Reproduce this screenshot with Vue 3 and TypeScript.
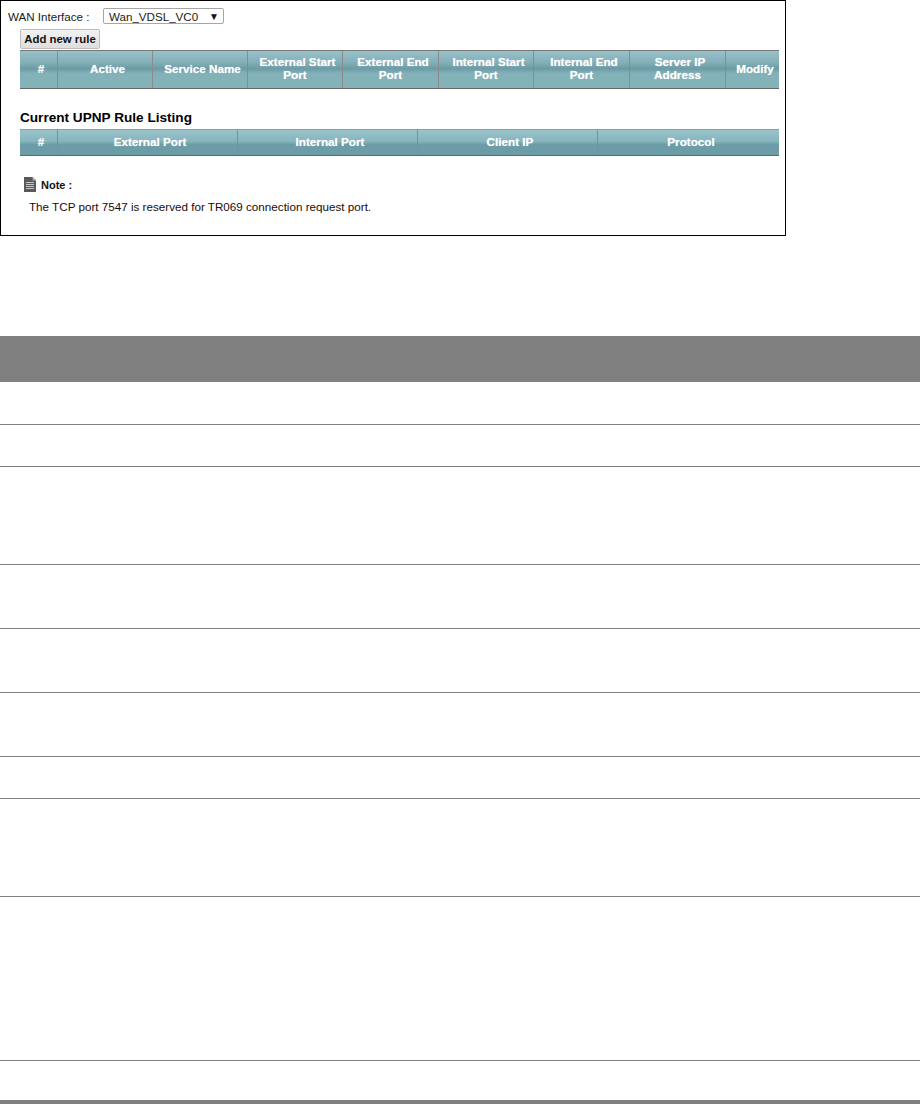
<script setup lang="ts">
const ruleCols: string[][] = [
  ['#'], ['Active'], ['Service Name'], ['External Start', 'Port'], ['External End', 'Port'],
  ['Internal Start', 'Port'], ['Internal End', 'Port'], ['Server IP', 'Address'], ['Modify'],
]
const listCols: string[] = ['#', 'External Port', 'Internal Port', 'Client IP', 'Protocol']
const rowHeights: number[] = [43, 42, 98, 64, 64, 64, 42, 98, 164]
</script>

<template>
  <div class="page">
    <section class="frame">
      <div class="wan">
        <span class="wan-label">WAN Interface :</span>
        <div class="select"><span>Wan_VDSL_VC0</span><span class="arrow">▼</span></div>
      </div>
      <button class="add" type="button">Add new rule</button>
      <div class="thead rules">
        <div v-for="(c, i) in ruleCols" :key="i" class="th">
          <span v-for="l in c" :key="l">{{ l }}</span>
        </div>
      </div>
      <h2 class="title">Current UPNP Rule Listing</h2>
      <div class="thead list">
        <div v-for="c in listCols" :key="c" class="th"><span>{{ c }}</span></div>
      </div>
      <div class="note">
        <svg class="note-icon" width="12" height="15" viewBox="0 0 12 15">
          <path d="M0 0H8.5L12 3.5V15H0Z" fill="#5a5a5a" />
          <path d="M8.5 0V3.5H12Z" fill="#a8a8a8" />
          <path d="M2 5.5H10M2 7.5H10M2 9.5H10M2 11.5H10" stroke="#c4c4c4" stroke-width="1" />
        </svg>
        <span>Note :</span>
      </div>
      <p class="note-text">The TCP port 7547 is reserved for TR069 connection request port.</p>
    </section>

    <section class="desc">
      <div class="desc-head"></div>
      <div v-for="(h, i) in rowHeights" :key="i" class="desc-row" :style="{ height: h + 'px' }"></div>
      <div class="desc-last"></div>
    </section>
  </div>
</template>

<style>
html, body { margin: 0; background: #fff; }
</style>

<style scoped>
.page {
  width: 920px;
  height: 1104px;
  overflow: hidden;
  background: #fff;
  font-family: "Liberation Sans", Arial, sans-serif;
}
.frame {
  box-sizing: border-box;
  width: 786px;
  height: 236px;
  border: 1px solid #000;
  padding: 7px 6px 0 7px;
  color: #1a1a1a;
}
.wan {
  display: flex;
  align-items: center;
  height: 16px;
  font-size: 11.6px;
}
.wan-label { width: 95px; }
.select {
  box-sizing: border-box;
  width: 121px;
  height: 16px;
  display: flex;
  justify-content: space-between;
  align-items: center;
  padding: 0 4px 0 5px;
  border: 1px solid #a6a6a6;
  border-radius: 2px;
  font-size: 11.6px;
}
.arrow { font-size: 10px; color: #111; }
.add {
  display: block;
  box-sizing: border-box;
  margin: 5px 0 0 12px;
  width: 80px;
  height: 20px;
  padding: 0;
  border: 1px solid #bdbdbd;
  border-radius: 2px;
  background: linear-gradient(#f2f2f2, #dedede);
  font-family: inherit;
  font-size: 11.4px;
  font-weight: 700;
  color: #111;
}
.thead {
  box-sizing: border-box;
  display: grid;
  width: 759px;
  margin-left: 12px;
  border-top: 1px solid #777;
  border-bottom: 1px solid #666;
}
.rules {
  height: 39px;
  margin-top: 1px;
  grid-template-columns: 38px 95px 95px 95px 96px 95px 96px 96px 1fr;
  background: linear-gradient(#98c1c9 0%, #84b0b9 30%, #6c9ba5 48%, #82b1b8 60%, #84b3ba 100%);
}
.list {
  height: 27px;
  grid-template-columns: 38px 180px 180px 180px 1fr;
  border-top-color: #999;
  background: linear-gradient(#9ac3cb 0%, #86b5bd 45%, #6c9ca7 58%, #6c9ca6 100%);
}
.th {
  box-sizing: border-box;
  display: flex;
  flex-direction: column;
  align-items: center;
  justify-content: center;
  border-right: 1px solid #8b8b8b;
  font-size: 11.7px;
  line-height: 12.5px;
  font-weight: 700;
  color: #fff;
  text-shadow: 0 0 1px rgba(255, 255, 255, 0.6);
}
.th:has(span + span) { padding-bottom: 2px; }
.th span:first-child { padding-left: 5px; }
.th:last-child { border-right: 0; }
.title {
  margin: 21px 0 3px 12px;
  font-size: 13.6px;
  line-height: 16px;
  font-weight: 700;
  color: #000;
}
.note {
  display: flex;
  align-items: center;
  gap: 5px;
  margin: 21px 0 0 16px;
  height: 15px;
  font-size: 11px;
  font-weight: 700;
  color: #111;
}
.note-text {
  margin: 8px 0 0 21px;
  font-size: 11.67px;
  line-height: 14px;
  color: #1a0a0a;
}
.desc {
  margin-top: 100px;
}
.desc-head {
  height: 46px;
  background: #808080;
}
.desc-row {
  box-sizing: border-box;
  border-bottom: 1px solid #808080;
}
.desc-last {
  box-sizing: border-box;
  height: 43px;
  border-bottom: 4px solid #808080;
}
</style>
